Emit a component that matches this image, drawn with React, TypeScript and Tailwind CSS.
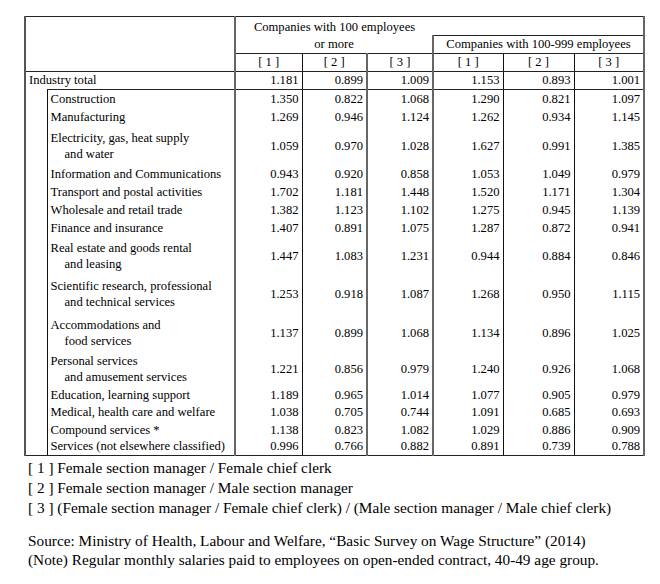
const data = [
  { label: ['Construction'], v: ['1.350', '0.822', '1.068', '1.290', '0.821', '1.097'], h: 'h-[19px]' },
  { label: ['Manufacturing'], v: ['1.269', '0.946', '1.124', '1.262', '0.934', '1.145'], h: 'h-[18px]' },
  { label: ['Electricity, gas, heat supply', 'and water'], v: ['1.059', '0.970', '1.028', '1.627', '0.991', '1.385'], h: 'h-[39px]' },
  { label: ['Information and Communications'], v: ['0.943', '0.920', '0.858', '1.053', '1.049', '0.979'], h: 'h-[18px]' },
  { label: ['Transport and postal activities'], v: ['1.702', '1.181', '1.448', '1.520', '1.171', '1.304'], h: 'h-[18px]' },
  { label: ['Wholesale and retail trade'], v: ['1.382', '1.123', '1.102', '1.275', '0.945', '1.139'], h: 'h-[18px]' },
  { label: ['Finance and insurance'], v: ['1.407', '0.891', '1.075', '1.287', '0.872', '0.941'], h: 'h-[18px]' },
  { label: ['Real estate and goods rental', 'and leasing'], v: ['1.447', '1.083', '1.231', '0.944', '0.884', '0.846'], h: 'h-[37px]' },
  { label: ['Scientific research, professional', 'and technical services'], v: ['1.253', '0.918', '1.087', '1.268', '0.950', '1.115'], h: 'h-[40px]' },
  { label: ['Accommodations and', 'food services'], v: ['1.137', '0.899', '1.068', '1.134', '0.896', '1.025'], h: 'h-[38px]' },
  { label: ['Personal services', 'and amusement services'], v: ['1.221', '0.856', '0.979', '1.240', '0.926', '1.068'], h: 'h-[34px]' },
  { label: ['Education, learning support'], v: ['1.189', '0.965', '1.014', '1.077', '0.905', '0.979'], h: 'h-[17px]' },
  { label: ['Medical, health care and welfare'], v: ['1.038', '0.705', '0.744', '1.091', '0.685', '0.693'], h: 'h-[18px]' },
  { label: ['Compound services *'], v: ['1.138', '0.823', '1.082', '1.029', '0.886', '0.909'], h: 'h-[17px]' },
  { label: ['Services (not elsewhere classified)'], v: ['0.996', '0.766', '0.882', '0.891', '0.739', '0.788'], h: 'h-[17px]' },
];

const total = ['1.181', '0.899', '1.009', '1.153', '0.893', '1.001'];

// right borders per data column: thick grey after [3] groups, thin black otherwise
const colBorder = [
  'border-r border-r-[#111]',
  'border-r-2 border-r-[#666]',
  'border-r-2 border-r-[#666]',
  'border-r border-r-[#111]',
  'border-r border-r-[#111]',
  'border-r-2 border-r-[#666]',
];

export default function App() {
  return (
    <div className="w-[660px] h-[584px] bg-white text-black font-[family-name:Liberation_Serif,serif]">
      <div className="pt-4 pl-6">
        <table className="table-fixed border-collapse w-[619px] text-[12.6px] leading-[16px]">
          <colgroup>
            <col className="w-[22px]" />
            <col className="w-[188px]" />
            <col className="w-[67px]" />
            <col className="w-[65px]" />
            <col className="w-[66px]" />
            <col className="w-[70px]" />
            <col className="w-[71px]" />
            <col className="w-[70px]" />
          </colgroup>
          <thead>
            <tr className="h-[17px]">
              <th
                colSpan={2}
                rowSpan={3}
                className="p-0 border-l-2 border-l-[#555] border-t border-t-[#222] border-r-2 border-r-[#666] border-b border-b-[#222]"
              />
              <th colSpan={3} className="p-0 pt-[2px] font-normal text-center align-top border-t border-t-[#222] whitespace-nowrap">
                Companies with 100 employees
              </th>
              <th colSpan={3} className="p-0 border-t border-t-[#222] border-r-2 border-r-[#666] border-b border-b-[#222]" />
            </tr>
            <tr className="h-[18px]">
              <th colSpan={3} className="p-0 font-normal text-center align-middle border-b border-b-[#222]">
                or more
              </th>
              <th
                colSpan={3}
                className="p-0 font-normal text-center align-middle whitespace-nowrap border-l-2 border-l-[#666] border-r-2 border-r-[#666] border-b border-b-[#222]"
              >
                Companies with 100-999 employees
              </th>
            </tr>
            <tr className="h-[18px]">
              {['[ 1 ]', '[ 2 ]', '[ 3 ]', '[ 1 ]', '[ 2 ]', '[ 3 ]'].map((t, i) => (
                <th key={i} className={`p-0 font-normal text-center align-middle border-b border-b-[#222] ${colBorder[i]}`}>
                  {t}
                </th>
              ))}
            </tr>
          </thead>
          <tbody>
            <tr className="h-[18px]">
              <td colSpan={2} className="p-0 pl-[3px] align-middle border-l-2 border-l-[#555] border-r-2 border-r-[#666] whitespace-nowrap">
                Industry total
              </td>
              {total.map((v, i) => (
                <td key={i} className={`p-0 pr-[3px] text-right align-middle border-b border-b-[#222] ${colBorder[i]}`}>
                  {v}
                </td>
              ))}
            </tr>
            {data.map((r, ri) => {
              const last = ri === data.length - 1;
              const bottom = last ? 'border-b border-b-[#222]' : '';
              return (
                <tr key={ri} className={r.h}>
                  <td className={`p-0 border-l-2 border-l-[#555] ${bottom}`} />
                  <td
                    className={`p-0 pl-[3px] align-middle whitespace-nowrap border-l border-l-[#111] border-r-2 border-r-[#666] ${
                      ri === 0 ? 'border-t border-t-[#222]' : ''
                    } ${bottom}`}
                  >
                    {r.label.map((l, li) => (
                      <div key={li} className={li > 0 ? 'pl-[14px]' : ''}>
                        {l}
                      </div>
                    ))}
                  </td>
                  {r.v.map((v, i) => (
                    <td key={i} className={`p-0 pr-[3px] text-right align-middle ${colBorder[i]} ${bottom}`}>
                      {v}
                    </td>
                  ))}
                </tr>
              );
            })}
          </tbody>
        </table>
      </div>

      <div className="pl-7 pt-[2px] text-[15.3px] leading-[20px]">
        <p>[ 1 ] Female section manager / Female chief clerk</p>
        <p>[ 2 ] Female section manager / Male section manager</p>
        <p>[ 3 ] (Female section manager / Female chief clerk) / (Male section manager / Male chief clerk)</p>
        <p className="mt-[13px] leading-[19px]">
          Source: Ministry of Health, Labour and Welfare, “Basic Survey on Wage Structure” (2014)
        </p>
        <p className="leading-[19px]">
          (Note) Regular monthly salaries paid to employees on open-ended contract, 40-49 age group.
        </p>
      </div>
    </div>
  );
}
